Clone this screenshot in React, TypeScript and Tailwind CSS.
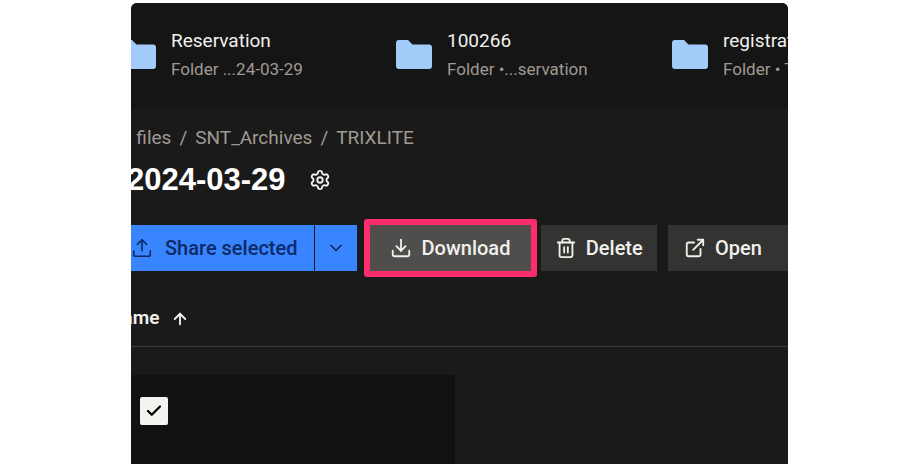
import React from 'react';
import { ArrowUp, Check, ChevronDown, Download, ExternalLink, Settings, Trash2, Upload } from 'lucide-react';

function FolderIcon() {
  return (
    <svg width="36" height="30" viewBox="0 0 36 30" className="shrink-0">
      <path d="M0 3a3 3 0 0 1 3-3h9l4.500 4.500H33a3 3 0 0 1 3 3V26a3 3 0 0 1-3 3H3a3 3 0 0 1-3-3Z" fill="#a3cbfa" />
    </svg>
  );
}

function FolderCard({ name, meta, width }: { name: string; meta: string; width: string }) {
  return (
    <div className={`flex items-center gap-[15px] shrink-0 ${width}`}>
      <FolderIcon />
      <div className="min-w-0 whitespace-nowrap">
        <div className="text-[19px] leading-[28px] text-[#f2f0ec]">{name}</div>
        <div className="text-[17px] leading-[28px] text-[#a09a92]">{meta}</div>
      </div>
    </div>
  );
}

export default function App() {
  return (
    <div className="h-[464px] w-[920px] bg-white pl-[131px] pr-[132px] pt-[3px] font-['Roboto',sans-serif]">
      <div className="h-[461px] overflow-hidden rounded-t-md bg-[#1a1a1a]">
        <div className="flex h-[106px] -ml-[11px] items-start bg-[#151515] pt-[24px]">
          <FolderCard name="Reservation" meta="Folder ...24-03-29" width="w-[276px]" />
          <FolderCard name="100266" meta="Folder •...servation" width="w-[276px]" />
          <FolderCard name="registration" meta="Folder • TRIXLITE" width="w-[276px]" />
        </div>

        <div className="-ml-[21px] mt-[15px] flex items-center gap-[8px] whitespace-nowrap text-[19px] leading-[28px] text-[#a09a92]">
          <span>All files</span>
          <span>/</span>
          <span>SNT_Archives</span>
          <span>/</span>
          <span>TRIXLITE</span>
        </div>

        <div className="-ml-[4px] mt-[8px] flex h-[40px] items-center gap-[23px]">
          <h1 className="font-['Liberation_Sans',sans-serif] text-[31px] font-bold leading-[40px] text-white">2024-03-29</h1>
          <Settings size={22} strokeWidth={2} className="text-[#f2f0ec]" />
        </div>

        <div className="mt-[25px] flex h-[46px] items-center whitespace-nowrap text-[20px] font-medium">
          <div className="flex h-[46px] w-[191px] items-center justify-end gap-[12px] bg-[#3984ff] pr-[17px] text-[#0b2a66]">
            <Upload size={22} strokeWidth={1.75} />
            <span>Share selected</span>
          </div>
          <div className="ml-[1px] flex h-[46px] w-[44px] items-center justify-center bg-[#3984ff] text-[#0b2a66]">
            <ChevronDown size={20} strokeWidth={2} />
          </div>
          <div className="ml-[7px] rounded-[3px] border-[6px] border-[#ff2d6b]">
            <div className="flex h-[46px] w-[161px] items-center justify-center gap-[10px] bg-[#4f4e4c] text-[#f2f0ec]">
              <Download size={22} strokeWidth={2} />
              <span>Download</span>
            </div>
          </div>
          <div className="ml-[4px] flex h-[46px] w-[125px] items-center justify-center gap-[9px] bg-[#333332] text-[#f2f0ec]">
            <Trash2 size={22} strokeWidth={2} />
            <span>Delete</span>
          </div>
          <div className="ml-[11px] flex h-[46px] w-[120px] shrink-0 items-center gap-[9px] bg-[#333332] pl-[16px] text-[#f2f0ec]">
            <ExternalLink size={22} strokeWidth={2} />
            <span>Open</span>
          </div>
        </div>

        <div className="-ml-[22px] mt-[25px] flex h-[51px] items-center gap-[12px] border-b border-[#3a3a39] pb-[5px] text-[19px] font-semibold text-[#f2f0ec]">
          <span>Name</span>
          <ArrowUp size={18} strokeWidth={2.5} />
        </div>

        <div className="mt-[28px] h-[89px] w-[324px] bg-[#111111] pl-[9px] pt-[22px]">
          <div className="flex h-[28px] w-[28px] items-center justify-center rounded-[2px] bg-[#f5f3ef] text-black">
            <Check size={18} strokeWidth={3} />
          </div>
        </div>
      </div>
    </div>
  );
}
